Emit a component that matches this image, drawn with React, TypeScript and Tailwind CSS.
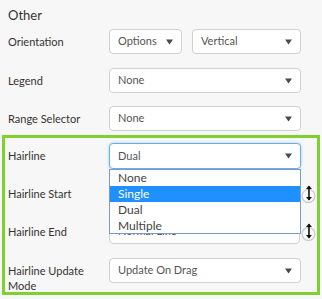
import React from "react";

const Caret = () => (
  <svg width="7" height="6" viewBox="0 0 7 6" className="shrink-0">
    <path d="M0 0.5 H7 L3.5 5.5 Z" fill="#4a4a4a" />
  </svg>
);

const Select = ({
  value,
  className = "",
  focused = false,
}: {
  value: string;
  className?: string;
  focused?: boolean;
}) => (
  <div
    className={
      "h-[25px] bg-white rounded-[4px] border flex items-center justify-between pl-[8px] pr-[8px] text-[11px] text-[#555] " +
      (focused
        ? "border-[#66afe9] shadow-[0_0_3px_rgba(102,175,233,0.6)] "
        : "border-[#d0d0d0] ") +
      className
    }
  >
    <span>{value}</span>
    <Caret />
  </div>
);

const Input = ({ value }: { value: string }) => (
  <div className="h-[25px] w-[192px] bg-white rounded-[4px] border border-[#d0d0d0] flex items-center pl-[8px] text-[11px] text-[#555]">
    {value}
  </div>
);

const Reorder = () => (
  <svg width="16" height="20" viewBox="0 0 16 20" className="ml-[1px] mt-[2px]">
    <circle cx="7.5" cy="13" r="6.5" fill="none" stroke="#c8c8c8" strokeWidth="1.2" />
    <path d="M8 3 V17" stroke="#111" strokeWidth="1.6" />
    <path d="M5 6 L8 2.5 L11 6 Z" fill="#111" />
    <path d="M5 14 L8 17.5 L11 14 Z" fill="#111" />
  </svg>
);

const Label = ({ children }: { children: React.ReactNode }) => (
  <div className="w-[101px] shrink-0 pt-[5px] leading-[15px] text-[11px] text-[#333]">
    {children}
  </div>
);

export default function App() {
  return (
    <div
      className="w-[322px] h-[299px] bg-[#f7f7f7] overflow-hidden"
      style={{ fontFamily: 'Lato, "Open Sans", sans-serif' }}
    >
      <div className="pl-[8px] pt-[6px] text-[13px] leading-[18px] text-[#333]">Other</div>

      <div className="flex items-start pl-[8px] mt-[5px]">
        <Label>Orientation</Label>
        <Select value="Options" className="w-[73px]" />
        <Select value="Vertical" className="w-[109px] ml-[10px]" />
      </div>

      <div className="flex items-start pl-[8px] mt-[14px]">
        <Label>Legend</Label>
        <Select value="None" className="w-[192px]" />
      </div>

      <div className="flex items-start pl-[8px] mt-[13px]">
        <Label>Range Selector</Label>
        <Select value="None" className="w-[192px]" />
      </div>

      <div className="mx-[2px] mt-[4px] border-[3px] border-[#7ed12f] pt-[5px] pl-[3px] h-[160px]">
        <div className="relative">
          <div className="flex items-start">
            <Label>Hairline</Label>
            <Select value="Dual" focused className="w-[192px] h-[26px]" />
          </div>

          <div className="flex items-start mt-[12px]">
            <Label>Hairline Start</Label>
            <Input value="" />
            <Reorder />
          </div>

          <div className="flex items-start mt-[13px]">
            <Label>Hairline End</Label>
            <Input value="Normal Line" />
            <Reorder />
          </div>

          <div className="flex items-start mt-[14px]">
            <Label>
              Hairline Update
              <br />
              Mode
            </Label>
            <Select value="Update On Drag" className="w-[192px]" />
          </div>

          <div className="absolute left-[101px] top-[26px] w-[192px] bg-white border border-[#7a9cc4] text-[12px] leading-[16px] text-[#444]">
            <div className="pl-[8px] h-[16px]">None</div>
            <div className="pl-[8px] h-[16px] bg-[#1e90ff] text-white">Single</div>
            <div className="pl-[8px] h-[16px]">Dual</div>
            <div className="pl-[8px] h-[15px]">Multiple</div>
          </div>
        </div>
      </div>
    </div>
  );
}
